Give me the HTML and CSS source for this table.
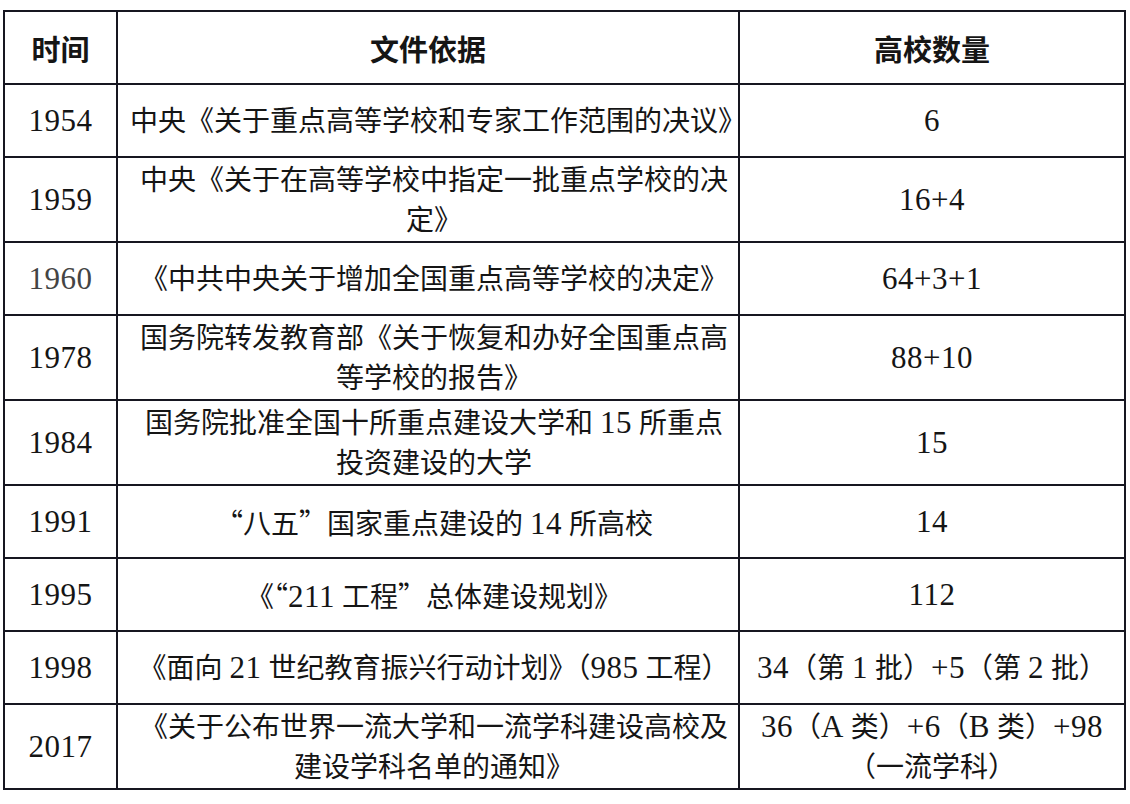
FILE: index.html
```html
<!DOCTYPE html>
<html lang="zh-CN">
<head>
<meta charset="utf-8">
<title>重点高校</title>
<link rel="stylesheet" href="styles.css">
</head>
<body>
<table class="grid">
  <colgroup>
    <col class="c-year">
    <col class="c-doc">
    <col class="c-num">
  </colgroup>
  <tr class="row-single head">
    <th>时间</th><th>文件依据</th><th>高校数量</th>
  </tr>
  <tr class="row-single">
    <td class="lat">1954</td><td class="doc">中央《关于重点高等学校和专家工作范围的决议》</td><td class="lat">6</td>
  </tr>
  <tr class="row-double">
    <td class="lat">1959</td><td class="doc">中央《关于在高等学校中指定一批重点学校的决<br>定》</td><td class="lat">16+4</td>
  </tr>
  <tr class="row-single">
    <td class="lat light">1960</td><td class="doc">《中共中央关于增加全国重点高等学校的决定》</td><td class="lat">64+3+1</td>
  </tr>
  <tr class="row-double">
    <td class="lat">1978</td><td class="doc">国务院转发教育部《关于恢复和办好全国重点高<br>等学校的报告》</td><td class="lat">88+10</td>
  </tr>
  <tr class="row-double">
    <td class="lat">1984</td><td class="doc">国务院批准全国十所重点建设大学和 <span class="lat">15</span> 所重点<br>投资建设的大学</td><td class="lat">15</td>
  </tr>
  <tr class="row-single">
    <td class="lat">1991</td><td class="doc"><span class="q">“</span>八五<span class="q">”</span>国家重点建设的 <span class="lat">14</span> 所高校</td><td class="lat">14</td>
  </tr>
  <tr class="row-single">
    <td class="lat">1995</td><td class="doc">《<span class="q">“</span><span class="lat">211</span> 工程<span class="q">”</span>总体建设规划》</td><td class="lat">112</td>
  </tr>
  <tr class="row-single">
    <td class="lat">1998</td><td class="doc">《面向 <span class="lat">21</span> 世纪教育振兴行动计划》（<span class="lat">985</span> 工程）</td><td><span class="lat">34</span>（第 <span class="lat">1</span> 批）<span class="lat">+5</span>（第 <span class="lat">2</span> 批）</td>
  </tr>
  <tr class="row-double">
    <td class="lat">2017</td><td class="doc">《关于公布世界一流大学和一流学科建设高校及<br>建设学科名单的通知》</td><td><span class="lat">36</span>（<span class="lat">A</span> 类）<span class="lat">+6</span>（<span class="lat">B</span> 类）<span class="lat">+98</span><br>（一流学科）</td>
  </tr>
</table>
</body>
</html>
```

FILE: styles.css
```css
html, body {
  margin: 0;
  padding: 0;
  background: #ffffff;
}
body {
  padding: 10px 0 0 3px;
  font-family: "Liberation Serif", "Noto Sans CJK SC", serif;
  color: #151515;
}
.grid {
  border-collapse: collapse;
  width: 1121px;
  table-layout: fixed;
}
.c-year { width: 113px; }
.c-doc { width: 622px; }
.c-num { width: 386px; }
.grid th,
.grid td {
  border: 2px solid #161620;
  text-align: center;
  vertical-align: middle;
  font-size: 28px;
  line-height: 40px;
  padding: 3px 0 0;
  font-weight: normal;
}
.grid td.doc {
  padding-left: 12px;
}
.grid th {
  font-family: "Noto Sans CJK SC", sans-serif;
  font-weight: bold;
  font-size: 29px;
  padding-top: 0;
}
.grid .lat,
.lat {
  font-family: "Liberation Serif", serif;
  font-size: 31px;
  line-height: 36px;
  letter-spacing: 0.5px;
}
.grid td.lat {
  padding-top: 0;
}
.light {
  color: #444444;
}
.q {
  font-family: "Noto Sans CJK SC", sans-serif;
}
.row-single { height: 73px; }
.row-double { height: 83px; }
```
